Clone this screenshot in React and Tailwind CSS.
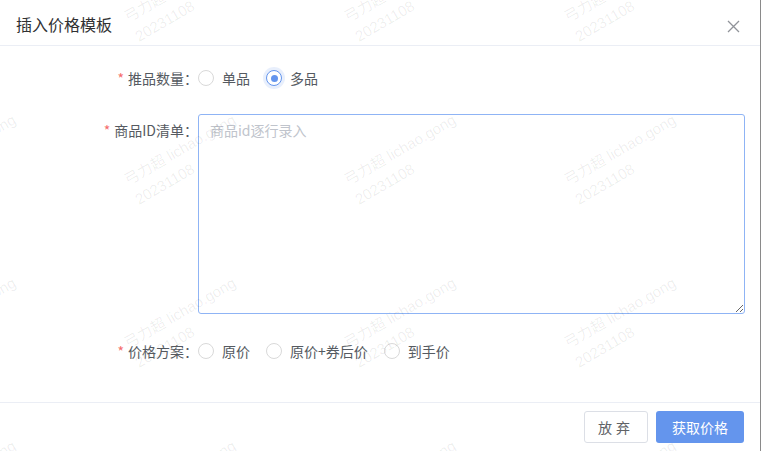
import React, { useState } from 'react';

const xs = [-100, 120, 340, 560, 780];
const ys = [9, 172, 335, 498];

const Watermark = () => (
  <div className="pointer-events-none absolute inset-0 overflow-hidden">
    {ys.map((y) =>
      xs.map((x) => (
        <div
          key={`${x}-${y}`}
          className="absolute origin-top-left -rotate-30 whitespace-nowrap font-['Liberation_Sans','Noto_Sans_CJK_SC',sans-serif] text-[15px] leading-[22px] text-black/[0.07]"
          style={{ left: x, top: y }}
        >
          <div>弓力超 lichao.gong</div>
          <div>20231108</div>
        </div>
      ))
    )}
  </div>
);

const Radio = ({ label, checked, onClick }) => (
  <label className="mr-[16px] flex cursor-pointer items-center" onClick={onClick}>
    {checked ? (
      <span className="flex h-4 w-4 items-center justify-center rounded-full border border-[#6495ed] bg-white shadow-[0_0_0_3px_rgba(100,149,237,0.15)]">
        <span className="h-[7px] w-[7px] rounded-full bg-[#6495ed]" />
      </span>
    ) : (
      <span className="h-4 w-4 rounded-full border border-[#d9d9d9] bg-white" />
    )}
    <span className="ml-2 text-[14px] text-[#555a61]">{label}</span>
  </label>
);

const FormLabel = ({ children }) => (
  <div className="flex w-[198px] shrink-0 justify-end text-[14px] text-[#555a61]">
    <span className="mr-1 text-[#f56c6c]">*</span>
    {children}
  </div>
);

export default function App() {
  const [count, setCount] = useState('multi');
  const [plan, setPlan] = useState(null);

  return (
    <div className="relative h-[451px] w-[761px] overflow-hidden border-r border-[#8a8a8a] bg-white font-['Noto_Sans_CJK_SC',sans-serif]">
      {/* header */}
      <div className="flex h-[46px] items-center justify-between border-b border-[#ebeef5] pl-4 pr-[20px]">
        <div className="pt-[3px] text-[16px] text-[#303133]">插入价格模板</div>
        <svg width="13" height="13" viewBox="0 0 13 13" className="mt-[7px]">
          <path d="M1 1 L12 12 M12 1 L1 12" stroke="#909399" strokeWidth="1.3" fill="none" />
        </svg>
      </div>

      {/* body */}
      <div className="pt-4 pb-[35px]">
        <div className="flex h-8 items-center">
          <FormLabel>推品数量：</FormLabel>
          <div className="flex items-center">
            <Radio label="单品" checked={count === 'single'} onClick={() => setCount('single')} />
            <Radio label="多品" checked={count === 'multi'} onClick={() => setCount('multi')} />
          </div>
        </div>

        <div className="mt-5 flex">
          <div className="pt-[6px]">
            <FormLabel>商品ID清单：</FormLabel>
          </div>
          <textarea
            placeholder="商品id逐行录入"
            className="h-[200px] w-[547px] rounded-[3px] border border-[#8fb4f5] px-[11px] py-[5px] text-[14px] leading-[1.5] text-[#606266] outline-none placeholder:text-[#c0c4cc]"
          />
        </div>

        <div className="mt-[21px] flex h-8 items-center">
          <FormLabel>价格方案：</FormLabel>
          <div className="flex items-center">
            <Radio label="原价" checked={plan === 'a'} onClick={() => setPlan('a')} />
            <Radio label="原价+券后价" checked={plan === 'b'} onClick={() => setPlan('b')} />
            <Radio label="到手价" checked={plan === 'c'} onClick={() => setPlan('c')} />
          </div>
        </div>
      </div>

      {/* footer */}
      <div className="flex justify-end gap-2 border-t border-[#ebeef5] pt-2 pr-4">
        <button className="h-8 w-16 rounded-[3px] border border-[#dcdfe6] bg-white text-[14px] tracking-[4px] text-[#606266]">
          放弃
        </button>
        <button className="h-8 w-[88px] rounded-[3px] bg-[#6495ed] text-[14px] text-white">
          获取价格
        </button>
      </div>

      <Watermark />
    </div>
  );
}
